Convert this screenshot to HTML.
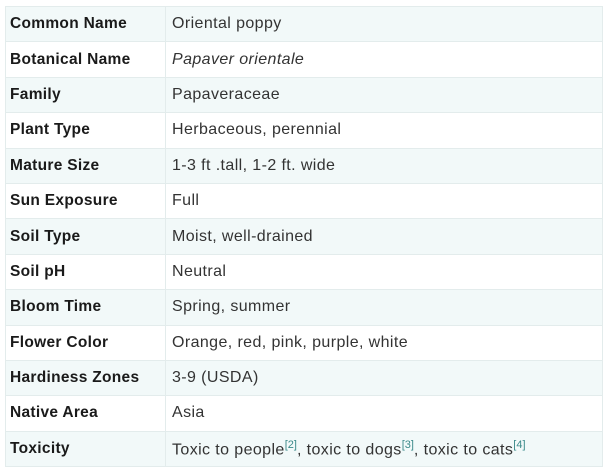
<!DOCTYPE html>
<html><head><style>
body{margin:0;background:#fff;font-family:"Liberation Sans",sans-serif;}
table{position:absolute;left:5px;top:6px;width:598px;border-collapse:collapse;}
td{height:34.4px;padding:0 0 0 6px;border:1px solid #e3ecec;font-size:16px;letter-spacing:0.4px;color:#333;}
td:first-child{width:155px;padding-left:4px;font-weight:bold;font-size:15.5px;letter-spacing:0.3px;color:#1a1a1a;}
tr:nth-child(odd){background:#f2f9f9;}
sup{color:#3b8a8a;font-size:11px;letter-spacing:0;}
</style></head><body>
<table>
<tr><td>Common Name</td><td>Oriental poppy</td></tr>
<tr><td>Botanical Name</td><td><i>Papaver orientale</i></td></tr>
<tr><td>Family</td><td>Papaveraceae</td></tr>
<tr><td>Plant Type</td><td>Herbaceous, perennial</td></tr>
<tr><td>Mature Size</td><td>1-3 ft .tall, 1-2 ft. wide</td></tr>
<tr><td>Sun Exposure</td><td>Full</td></tr>
<tr><td>Soil Type</td><td>Moist, well-drained</td></tr>
<tr><td>Soil pH</td><td>Neutral</td></tr>
<tr><td>Bloom Time</td><td>Spring, summer</td></tr>
<tr><td>Flower Color</td><td>Orange, red, pink, purple, white</td></tr>
<tr><td>Hardiness Zones</td><td>3-9 (USDA)</td></tr>
<tr><td>Native Area</td><td>Asia</td></tr>
<tr><td>Toxicity</td><td>Toxic to people<sup>[2]</sup>, toxic to dogs<sup>[3]</sup>, toxic to cats<sup>[4]</sup></td></tr>
</table>
</body></html>
